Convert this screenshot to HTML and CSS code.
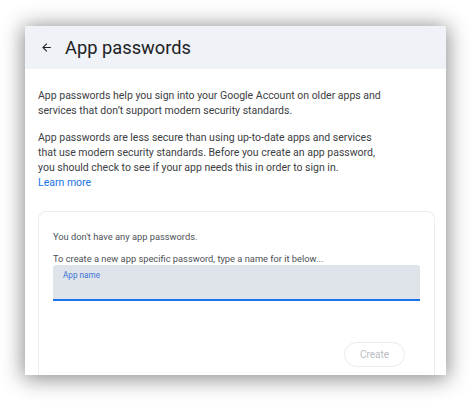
FILE: index.html
```html
<!DOCTYPE html>
<html lang="en">
<head>
<meta charset="utf-8">
<title>App passwords</title>
<link rel="stylesheet" href="styles.css">
</head>
<body>
<div class="stage">
  <div class="window">
    <header class="header">
      <svg class="back" width="13" height="13" viewBox="0 0 24 24" aria-hidden="true"><path d="M20 11H7.83l5.59-5.59L12 4l-8 8 8 8 1.41-1.41L7.83 13H20v-2z" fill="#202124"/></svg>
      <h1 class="title">App passwords</h1>
    </header>
    <main class="content">
      <p class="para">App passwords help you sign into your Google Account on older apps and services that don’t support modern security standards.</p>
      <p class="para">App passwords are less secure than using up-to-date apps and services that use modern security standards. Before you create an app password, you should check to see if your app needs this in order to sign in.<br><a class="link" href="#">Learn more</a></p>
      <section class="panel">
        <p class="note">You don't have any app passwords.</p>
        <p class="note note-tight">To create a new app specific password, type a name for it below...</p>
        <div class="field">
          <span class="field-label">App name</span>
        </div>
        <div class="actions">
          <button class="create" type="button">Create</button>
        </div>
      </section>
    </main>
  </div>
</div>
</body>
</html>
```
FILE: styles.css
```css
html, body {
  margin: 0;
  padding: 0;
  background: #ffffff;
}
body {
  font-family: Roboto, "Liberation Sans", Arial, sans-serif;
  width: 471px;
  height: 401px;
  overflow: hidden;
}
.stage {
  padding: 26px 0 0 25px;
}
.window {
  width: 421px;
  height: 349px;
  background: #ffffff;
  box-shadow: 0 2px 20px 2px rgba(0, 0, 0, 0.45);
  overflow: hidden;
  display: flex;
  flex-direction: column;
}
.header {
  height: 43px;
  flex: none;
  background: #eff2f7;
  display: flex;
  align-items: center;
  padding-left: 15px;
  box-sizing: border-box;
}
.back {
  display: block;
  margin-right: 12px;
}
.title {
  margin: 0;
  font-weight: 400;
  font-size: 18.3px;
  color: #202124;
  line-height: 24px;
}
.content {
  padding: 19px 11px 0 13px;
  flex: 1;
  display: flex;
  flex-direction: column;
}
.para {
  margin: 0 0 12px;
  max-width: 350px;
  font-size: 10.5px;
  line-height: 15px;
  color: #3c4043;
}
.link {
  color: #1a73e8;
  text-decoration: none;
}
.panel {
  margin-top: 9px;
  flex: 1;
  border: 1px solid #ececec;
  border-bottom: none;
  border-radius: 8px 8px 0 0;
  padding: 18px 14px 0;
}
.note {
  margin: 0 0 9px;
  font-size: 9.3px;
  line-height: 13px;
  color: #4d5156;
}
.note-tight {
  margin-bottom: 0;
}
.field {
  height: 36px;
  box-sizing: border-box;
  background: #dfe3ea;
  border-bottom: 2px solid #1a73e8;
  border-radius: 3px 3px 0 0;
  padding: 5px 10px 0;
}
.field-label {
  display: block;
  font-size: 8.2px;
  line-height: 11px;
  color: #3b73d6;
}
.actions {
  display: flex;
  justify-content: flex-end;
  padding: 41px 15px 0 0;
}
.create {
  width: 61px;
  height: 25px;
  border-radius: 13px;
  border: 1px solid #ebebeb;
  background: #ffffff;
  color: #b9bcc0;
  font-family: Roboto, "Liberation Sans", Arial, sans-serif;
  font-size: 10px;
  padding: 0;
}
```
